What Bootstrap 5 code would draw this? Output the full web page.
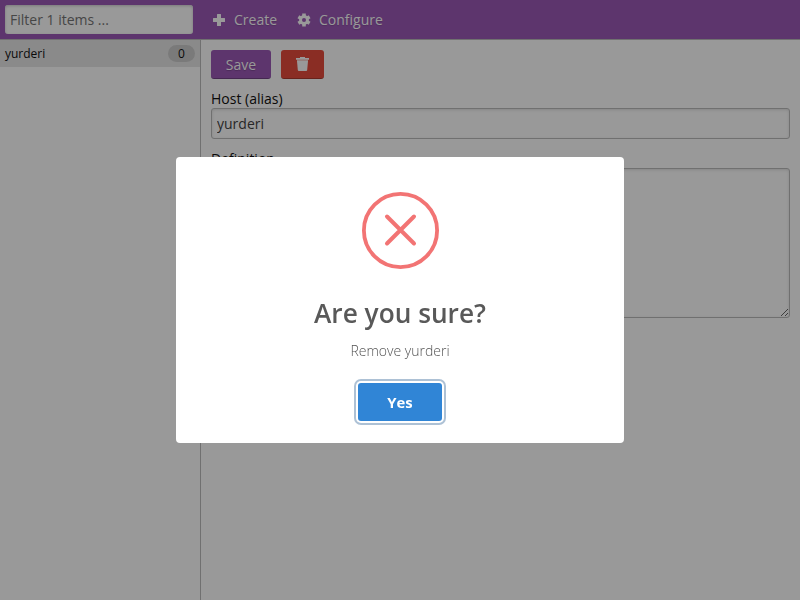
<!DOCTYPE html>
<html lang="en">
<head>
<meta charset="utf-8">
<meta name="viewport" content="width=device-width, initial-scale=1">
<title>Hosts</title>
<link href="https://cdn.jsdelivr.net/npm/bootstrap@5.3.0/dist/css/bootstrap.min.css" rel="stylesheet">
<style>
html, body { height: 100%; }
body { font: 14px/20px "Open Sans", sans-serif; color: #111; overflow: hidden; }
.form-control, .btn { font-size: 14px; }
.topbar { height: 40px; background: #9b59b6; border-bottom: 1px solid #bbb; color: #fff; padding: 0 5px; }
.filter-box { width: 188px; height: 29px; padding: 0 5px; border: 0; border-radius: 3px; box-shadow: inset 0 1px 3px #ccc; margin-top: -1px; }
.filter-box::placeholder { color: #757575; opacity: 1; }
.topbar .nav-link { display: flex; align-items: center; color: #fff; padding: 0; text-shadow: 0 1px 1px rgba(0,0,0,.15); }
.nav-icon { margin-right: 7px; }
.sidebar { width: 201px; border-right: 1px solid #bbb; }
.host-row { height: 27px; padding: 0 5px; font-size: 12px; background: #e6e6e6; }
.host-count { width: 27px; height: 17px; line-height: 17px; background: #ccc; color: #111; font-size: 12px; font-weight: 400; padding: 0; }
.editor { padding: 10px; }
.editor label { line-height: 20px; margin-top: 10px; height: 19px; }
.toolbar-row { gap: 10px; }
.tool { height: 29px; padding: 0; border: 0; border-bottom: 1px solid rgba(0,0,0,.25); border-radius: 3px; color: #fff; }
.tool-save { width: 60px; background: #9b59b6; text-shadow: 0 1px 1px rgba(0,0,0,.2); }
.tool-remove { width: 43px; background: #e74c3c; }
.field { border: 1px solid #bbb; border-radius: 3px; padding: 4px 5px; box-shadow: inset 0 1px 3px #ddd; color: #444; }
input.field { height: 31px; }
textarea.field { height: 150px; }
.dialog-layer { background: rgba(0,0,0,.4); }
.dialog-layer .modal-dialog { width: 448px; max-width: none; }
.dialog-layer .modal-content { height: 286px; border: 0; border-radius: 4px; padding-top: 35px; }
.dialog-title { font-size: 26.25px; line-height: 36px; font-weight: 600; color: #595959; margin: 26px 0 0; }
.dialog-text { font-size: 14px; line-height: 20px; font-weight: 300; color: #545454; margin: 10px 0 0; }
.confirm { width: 84px; height: 38px; padding: 0; border: 0; border-radius: 3px; background: #3085d6; color: #fff; font-size: 14.875px; font-weight: 700; margin-top: 22px; box-shadow: 0 0 0 2px #fff, 0 0 0 4px rgba(50,100,150,.4); }
</style>
</head>
<body class="d-flex flex-column">
<header class="topbar d-flex align-items-center flex-shrink-0">
  <input class="form-control filter-box" placeholder="Filter 1 items ..." aria-label="Filter">
  <nav class="nav">
    <a class="nav-link" href="#">
      <svg class="ms-3 nav-icon" width="18" height="12" viewBox="0 0 18 12" fill="#fff"><path d="M8.500 0h3q.5 0 .5.500V4h3.500q.5 0 .5.500v3q0 .5-.5.500H12v3.500q0 .5-.5.500h-3q-.5 0-.5-.5V8H4.500Q4 8 4 7.500v-3Q4 4 4.500 4H8V.5Q8 0 8.500 0z"/></svg>Create</a>
    <a class="nav-link" href="#">
      <svg class="ms-3 me-2" width="18" height="14" viewBox="0 0 18 14" fill="none"><g stroke="#fff" stroke-width="3.600"><path d="M11 .5v13M5.370 3.750l11.260 6.500M5.370 10.250l11.260-6.500"/></g><circle cx="11" cy="7" r="4.900" fill="#fff"/><circle cx="11" cy="7" r="2" fill="#9b59b6"/></svg>Configure</a>
  </nav>
</header>
<div class="d-flex flex-grow-1">
  <aside class="sidebar flex-shrink-0">
    <div class="host-row d-flex align-items-center justify-content-between"><span>yurderi</span><span class="badge rounded-pill host-count">0</span></div>
  </aside>
  <main class="editor flex-grow-1">
    <div class="d-flex toolbar-row">
      <button class="btn tool tool-save">Save</button>
      <button class="btn tool tool-remove d-flex align-items-center justify-content-center" aria-label="Remove">
        <svg width="13" height="14" viewBox="0 0 13 14" fill="#fff"><path d="M0 1h4V0h5v1h4v1.700H0z"/><path fill-opacity=".75" d="M1 2.700h11V4H1z"/><path d="M1 4h11l-.8 9q-.1 1-1 1H2.800q-.9 0-1-1z"/></svg>
      </button>
    </div>
    <label class="d-block" for="host">Host (alias)</label>
    <input id="host" class="form-control field" value="yurderi">
    <label class="d-block" for="definition">Definition</label>
    <textarea id="definition" class="form-control field"></textarea>
  </main>
</div>
<div class="modal d-block dialog-layer" role="dialog" aria-modal="true">
  <div class="modal-dialog modal-dialog-centered my-0 mx-auto min-vh-100">
    <div class="modal-content align-items-center">
      <svg class="flex-shrink-0" width="77" height="77" viewBox="0 0 77 77" fill="none" stroke="#f27474"><circle cx="38.500" cy="38.500" r="36.600" stroke-width="3.800"/><path d="M25 24.500l27 27M52 24.500l-27 27" stroke-width="4" stroke-linecap="round"/></svg>
      <h2 class="dialog-title">Are you sure?</h2>
      <p class="dialog-text">Remove yurderi</p>
      <button class="btn confirm">Yes</button>
    </div>
  </div>
</div>
<script src="https://cdn.jsdelivr.net/npm/bootstrap@5.3.0/dist/js/bootstrap.bundle.min.js"></script>
</body>
</html>
